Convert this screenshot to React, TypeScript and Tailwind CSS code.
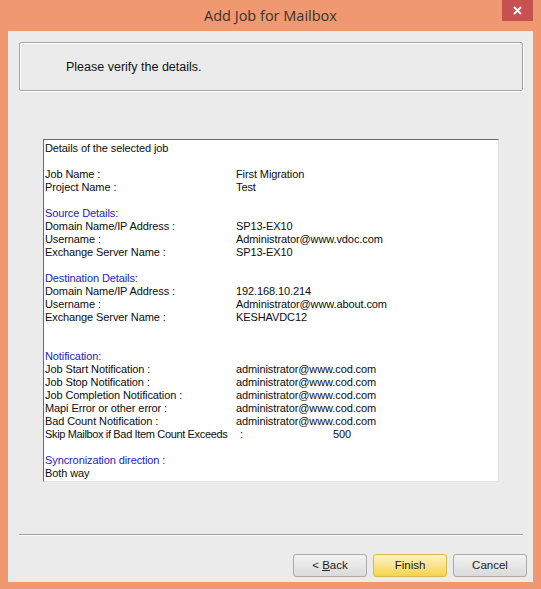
import React from "react";

type Row =
  | { t: "text"; label: string }
  | { t: "head"; label: string }
  | { t: "kv"; label: string; value: string }
  | { t: "blank" };

const rows: Row[] = [
  { t: "text", label: "Details of the selected job" },
  { t: "blank" },
  { t: "kv", label: "Job Name :", value: "First Migration" },
  { t: "kv", label: "Project Name :", value: "Test" },
  { t: "blank" },
  { t: "head", label: "Source Details:" },
  { t: "kv", label: "Domain Name/IP Address :", value: "SP13-EX10" },
  { t: "kv", label: "Username :", value: "Administrator@www.vdoc.com" },
  { t: "kv", label: "Exchange Server Name :", value: "SP13-EX10" },
  { t: "blank" },
  { t: "head", label: "Destination Details:" },
  { t: "kv", label: "Domain Name/IP Address :", value: "192.168.10.214" },
  { t: "kv", label: "Username :", value: "Administrator@www.about.com" },
  { t: "kv", label: "Exchange Server Name :", value: "KESHAVDC12" },
  { t: "blank" },
  { t: "blank" },
  { t: "head", label: "Notification:" },
  { t: "kv", label: "Job Start Notification :", value: "administrator@www.cod.com" },
  { t: "kv", label: "Job Stop Notification :", value: "administrator@www.cod.com" },
  { t: "kv", label: "Job Completion Notification :", value: "administrator@www.cod.com" },
  { t: "kv", label: "Mapi Error or other error :", value: "administrator@www.cod.com" },
  { t: "kv", label: "Bad Count Notification :", value: "administrator@www.cod.com" },
];

const rows2: Row[] = [
  { t: "blank" },
  { t: "head", label: "Syncronization direction :" },
  { t: "text", label: "Both way" },
];

function RowView({ r }: { r: Row }) {
  if (r.t === "blank") return <div className="h-[13px]" />;
  if (r.t === "head")
    return <div className="h-[13px] whitespace-nowrap text-[#2323c2]">{r.label}</div>;
  if (r.t === "text") return <div className="h-[13px] whitespace-nowrap">{r.label}</div>;
  return (
    <div className="flex h-[13px] whitespace-nowrap">
      <span className="w-[191px] shrink-0">{r.label}</span>
      <span>{r.value}</span>
    </div>
  );
}

const btn =
  "flex h-[23px] w-[74px] items-center justify-center rounded-[3px] border text-[11.5px] text-[#1b1b1b]";

export default function App() {
  return (
    <div
      className="flex h-[589px] w-[541px] flex-col bg-[#f0986f]"
      style={{ fontFamily: '"Liberation Sans", Arial, sans-serif' }}
    >
      {/* title bar */}
      <div className="relative flex h-[31px] shrink-0 items-center justify-center">
        <span
          className="pt-[1px] text-[14.5px] text-[#3a3330]"
          style={{ fontFamily: '"Open Sans", "Liberation Sans", sans-serif' }}
        >
          Add Job for Mailbox
        </span>
        <div className="absolute right-[8px] top-0 flex h-[21px] w-[31px] items-center justify-center bg-[#c75050]">
          <svg width="9" height="9" viewBox="0 0 9 9">
            <path d="M1 1 L8 8 M8 1 L1 8" stroke="#fff" strokeWidth="1.8" />
          </svg>
        </div>
      </div>

      {/* client */}
      <div className="mx-[8px] flex h-[551px] flex-col bg-[#ebebeb]">
        {/* header panel */}
        <div className="ml-[11px] mt-[11px] flex h-[49px] w-[504px] items-center rounded-[2px] border border-[#a3a3a3] pl-[46px] pt-[2px] shadow-[1px_1px_0_#ffffff,inset_1px_1px_0_#ffffff]">
          <span className="text-[12.5px] text-[#111]">Please verify the details.</span>
        </div>

        {/* details box */}
        <div className="ml-[35px] mt-[48px] h-[343px] w-[456px] border-b border-l border-r border-t border-b-[#e3e3e3] border-l-[#6a6a6a] border-r-[#e3e3e3] border-t-[#6a6a6a] bg-white pl-[1px] pt-[2px] text-[11px] leading-[13px] tracking-[-0.1px] text-[#0d0d0d]">
          {rows.map((r, i) => (
            <RowView key={i} r={r} />
          ))}
          <div className="flex h-[13px] whitespace-nowrap">
            <span className="w-[187px] shrink-0 tracking-[-0.35px]">
              Skip Mailbox if Bad Item Count Exceeds
            </span>
            <span className="w-[101px] shrink-0 pl-[8px]">:</span>
            <span>500</span>
          </div>
          {rows2.map((r, i) => (
            <RowView key={"b" + i} r={r} />
          ))}
        </div>

        {/* separator */}
        <div className="ml-[11px] mt-[52px] w-[504px] border-b border-t border-b-white border-t-[#a0a0a0]" />

        {/* buttons */}
        <div className="mt-[18px] flex justify-end gap-[6px] pr-[6px]">
          <div className={btn + " border-[#acacac] bg-gradient-to-b from-[#f3f3f3] to-[#dadada]"}>
            &lt;&nbsp;<span className="underline underline-offset-[1px]">B</span>ack
          </div>
          <div className={btn + " border-[#d8b94e] bg-gradient-to-b from-[#fdf3c4] to-[#f6d345]"}>
            Finish
          </div>
          <div className={btn + " border-[#acacac] bg-gradient-to-b from-[#f3f3f3] to-[#dadada]"}>
            Cancel
          </div>
        </div>
      </div>
    </div>
  );
}
